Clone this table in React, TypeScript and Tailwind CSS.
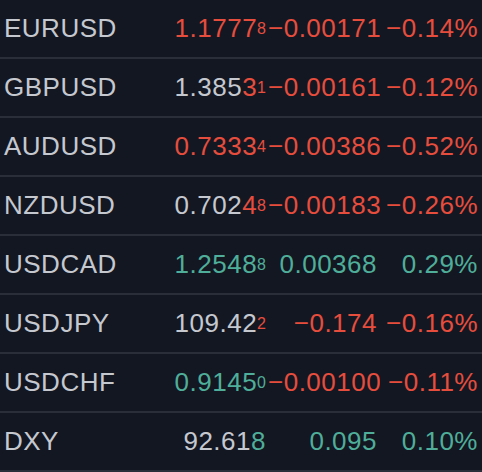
const RED = "text-[#e64d3d]";
const TEAL = "text-[#4fae99]";
const GRAY = "text-[#c5c8cf]";

type Part = { t: string; c: string; sup?: boolean };

type Row = {
  symbol: string;
  price: Part[];
  change: string;
  pct: string;
  up: boolean;
};

const rows: Row[] = [
  { symbol: "EURUSD", price: [{ t: "1.1777", c: RED }, { t: "8", c: RED, sup: true }], change: "−0.00171", pct: "−0.14%", up: false },
  { symbol: "GBPUSD", price: [{ t: "1.385", c: GRAY }, { t: "3", c: RED }, { t: "1", c: RED, sup: true }], change: "−0.00161", pct: "−0.12%", up: false },
  { symbol: "AUDUSD", price: [{ t: "0.7333", c: RED }, { t: "4", c: RED, sup: true }], change: "−0.00386", pct: "−0.52%", up: false },
  { symbol: "NZDUSD", price: [{ t: "0.702", c: GRAY }, { t: "4", c: RED }, { t: "8", c: RED, sup: true }], change: "−0.00183", pct: "−0.26%", up: false },
  { symbol: "USDCAD", price: [{ t: "1.2548", c: TEAL }, { t: "8", c: TEAL, sup: true }], change: "0.00368", pct: "0.29%", up: true },
  { symbol: "USDJPY", price: [{ t: "109.42", c: GRAY }, { t: "2", c: RED, sup: true }], change: "−0.174", pct: "−0.16%", up: false },
  { symbol: "USDCHF", price: [{ t: "0.9145", c: TEAL }, { t: "0", c: TEAL, sup: true }], change: "−0.00100", pct: "−0.11%", up: false },
  { symbol: "DXY", price: [{ t: "92.61", c: GRAY }, { t: "8", c: TEAL }], change: "0.095", pct: "0.10%", up: true },
];

export default function App() {
  return (
    <div className="w-[482px] h-[472px] overflow-hidden bg-[#131722] font-['Liberation_Sans',Arial,sans-serif] text-[26px]">
      {rows.map((r) => (
        <div key={r.symbol} className="flex items-center h-[59px] border-b-2 border-[#2a2e39] whitespace-nowrap tracking-[0.5px]">
          <div className={`flex-1 pl-[4px] ${GRAY}`}>{r.symbol}</div>
          <div className="w-[110px] text-right">
            {r.price.map((p, i) =>
              p.sup ? (
                <span key={i} className={`${p.c} text-[16px] tracking-normal align-[3px]`}>{p.t}</span>
              ) : (
                <span key={i} className={p.c}>{p.t}</span>
              )
            )}
          </div>
          <div className={`w-[114px] pl-[2px] pr-[3px] text-right overflow-hidden ${r.up ? TEAL : RED}`}>{r.change}</div>
          <div className={`w-[102px] pr-[4px] text-right ${r.up ? TEAL : RED}`}>{r.pct}</div>
        </div>
      ))}
    </div>
  );
}
